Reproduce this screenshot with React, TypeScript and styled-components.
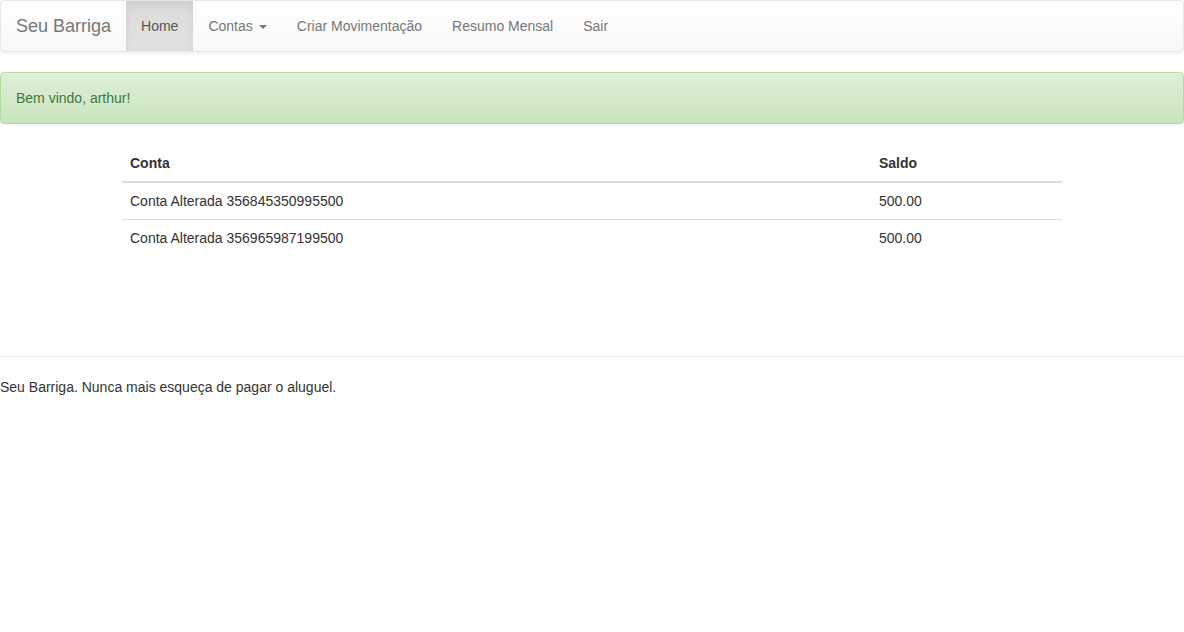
import React from "react";
import styled, { createGlobalStyle } from "styled-components";

const Global = createGlobalStyle`
  html, body { margin: 0; padding: 0; background: #fff; }
  body {
    font-family: "Liberation Sans", Arial, Helvetica, sans-serif;
    font-size: 14px;
    line-height: 1.42857143;
    color: #333;
  }
  * { box-sizing: border-box; }
`;

const Navbar = styled.nav`
  display: flex;
  align-items: stretch;
  min-height: 52px;
  padding: 0 15px;
  margin-bottom: 20px;
  border: 1px solid #e7e7e7;
  border-radius: 4px;
  background-image: linear-gradient(to bottom, #fff 0, #f8f8f8 100%);
  box-shadow: inset 0 1px 0 rgba(255, 255, 255, 0.15), 0 1px 5px rgba(0, 0, 0, 0.075);
`;

const Brand = styled.a`
  display: block;
  height: 50px;
  margin-left: -15px;
  padding: 15px;
  font-size: 18px;
  line-height: 20px;
  color: #777;
  text-decoration: none;
  text-shadow: 0 1px 0 rgba(255, 255, 255, 0.25);
`;

const NavList = styled.ul`
  display: flex;
  list-style: none;
  margin: 0;
  padding: 0;
`;

const NavLink = styled.a<{ $active?: boolean }>`
  display: block;
  padding: 15px;
  line-height: 20px;
  height: 50px;
  color: ${(p) => (p.$active ? "#555" : "#777")};
  text-decoration: none;
  text-shadow: 0 1px 0 rgba(255, 255, 255, 0.25);
  background-image: ${(p) =>
    p.$active ? "linear-gradient(to bottom, #dbdbdb 0, #e2e2e2 100%)" : "none"};
  box-shadow: ${(p) => (p.$active ? "inset 0 3px 9px rgba(0, 0, 0, 0.075)" : "none")};
`;

const Caret = styled.span`
  display: inline-block;
  width: 0;
  height: 0;
  margin-left: 6px;
  vertical-align: middle;
  border-top: 4px solid #777;
  border-right: 4px solid transparent;
  border-left: 4px solid transparent;
`;

const Alert = styled.div`
  padding: 15px;
  margin-bottom: 20px;
  border: 1px solid #b2dba1;
  border-radius: 4px;
  color: #3c763d;
  background-image: linear-gradient(to bottom, #dff0d8 0, #c8e5bc 100%);
  text-shadow: 0 1px 0 rgba(255, 255, 255, 0.2);
  box-shadow: inset 0 1px 0 rgba(255, 255, 255, 0.25), 0 1px 2px rgba(0, 0, 0, 0.05);
`;

const Container = styled.div`
  width: 970px;
  margin: 0 auto;
  padding: 1px 15px 0;
`;

const Table = styled.table`
  width: 100%;
  border-collapse: collapse;
  border-spacing: 0;
  margin-bottom: 20px;
`;

const Th = styled.th<{ $w?: string }>`
  text-align: left;
  font-weight: bold;
  padding: 8px;
  line-height: 20px;
  border-bottom: 2px solid #ddd;
  vertical-align: bottom;
  width: ${(p) => p.$w || "auto"};
`;

const Td = styled.td`
  padding: 8px;
  line-height: 20px;
  border-top: 1px solid #ddd;
  vertical-align: top;
`;

const Rule = styled.hr`
  margin: 100px 0 20px;
  border: 0;
  border-top: 1px solid #eee;
`;

const Footer = styled.footer`
  line-height: 20px;
`;

const rows = [
  { conta: "Conta Alterada 356845350995500", saldo: "500.00" },
  { conta: "Conta Alterada 356965987199500", saldo: "500.00" },
];

export default function App() {
  return (
    <>
      <Global />
      <Navbar>
        <Brand href="#">Seu Barriga</Brand>
        <NavList>
          <li><NavLink $active href="#">Home</NavLink></li>
          <li><NavLink href="#">Contas<Caret /></NavLink></li>
          <li><NavLink href="#">Criar Movimentação</NavLink></li>
          <li><NavLink href="#">Resumo Mensal</NavLink></li>
          <li><NavLink href="#">Sair</NavLink></li>
        </NavList>
      </Navbar>
      <Alert>Bem vindo, arthur!</Alert>
      <Container>
        <Table>
          <thead>
            <tr>
              <Th>Conta</Th>
              <Th $w="191px">Saldo</Th>
            </tr>
          </thead>
          <tbody>
            {rows.map((r) => (
              <tr key={r.conta}>
                <Td>{r.conta}</Td>
                <Td>{r.saldo}</Td>
              </tr>
            ))}
          </tbody>
        </Table>
      </Container>
      <Rule />
      <Footer>Seu Barriga. Nunca mais esqueça de pagar o aluguel.</Footer>
    </>
  );
}
